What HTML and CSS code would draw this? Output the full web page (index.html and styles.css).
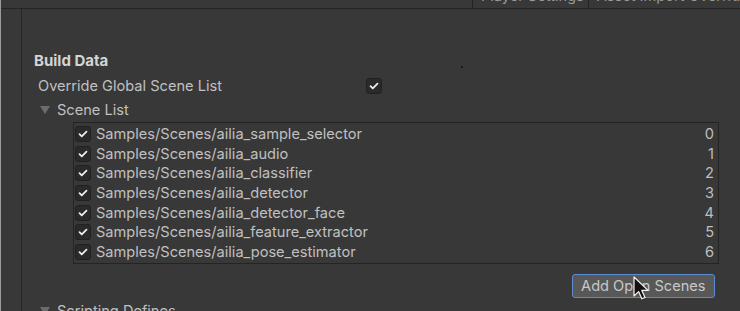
FILE: index.html
```html
<!DOCTYPE html>
<html lang="en">
<head>
  <meta charset="UTF-8">
  <title>Build Settings</title>
  <link rel="stylesheet" href="styles.css">
</head>
<body>
  <div class="window">
    <div class="tabbar">
      <div class="tab">Player Settings</div>
      <div class="tab">Asset Import Overrides</div>
    </div>
    <div class="body">
      <div class="gutter"></div>
      <div class="inspector">
        <h3 class="section-title">Build Data</h3>
        <div class="field">
          <span class="label">Override Global Scene List</span>
          <span class="checkbox"><svg viewBox="0 0 16 16"><path d="M4 8.2l2.6 2.6L12 5.4"/></svg></span>
          <span class="speck"></span>
        </div>
        <div class="foldout"><span class="arrow"></span>Scene List</div>
        <ul class="scene-list">
          <li class="scene"><span class="checkbox"><svg viewBox="0 0 16 16"><path d="M4 8.2l2.6 2.6L12 5.4"/></svg></span><span class="path">Samples/Scenes/ailia_sample_selector</span><span class="index">0</span></li>
          <li class="scene"><span class="checkbox"><svg viewBox="0 0 16 16"><path d="M4 8.2l2.6 2.6L12 5.4"/></svg></span><span class="path">Samples/Scenes/ailia_audio</span><span class="index">1</span></li>
          <li class="scene"><span class="checkbox"><svg viewBox="0 0 16 16"><path d="M4 8.2l2.6 2.6L12 5.4"/></svg></span><span class="path">Samples/Scenes/ailia_classifier</span><span class="index">2</span></li>
          <li class="scene"><span class="checkbox"><svg viewBox="0 0 16 16"><path d="M4 8.2l2.6 2.6L12 5.4"/></svg></span><span class="path">Samples/Scenes/ailia_detector</span><span class="index">3</span></li>
          <li class="scene"><span class="checkbox"><svg viewBox="0 0 16 16"><path d="M4 8.2l2.6 2.6L12 5.4"/></svg></span><span class="path">Samples/Scenes/ailia_detector_face</span><span class="index">4</span></li>
          <li class="scene"><span class="checkbox"><svg viewBox="0 0 16 16"><path d="M4 8.2l2.6 2.6L12 5.4"/></svg></span><span class="path">Samples/Scenes/ailia_feature_extractor</span><span class="index">5</span></li>
          <li class="scene"><span class="checkbox"><svg viewBox="0 0 16 16"><path d="M4 8.2l2.6 2.6L12 5.4"/></svg></span><span class="path">Samples/Scenes/ailia_pose_estimator</span><span class="index">6</span></li>
        </ul>
        <div class="actions">
          <button class="btn">Add Open Scenes</button>
          <svg class="cursor" viewBox="0 0 20 26"><path d="M2 1v19l4.6-4.4 3.2 7.2 3.2-1.4-3.2-7H16z"/></svg>
        </div>
        <div class="foldout"><span class="arrow"></span>Scripting Defines</div>
      </div>
    </div>
  </div>
</body>
</html>
```
FILE: styles.css
```css
* {
  margin: 0;
  padding: 0;
  box-sizing: border-box;
}

:root {
  --panel-bg: #383838;
  --line-dark: #242424;
  --text: #c0c0c0;
  --text-bright: #d4d4d4;
  --check-bg: #2a2a2a;
  --focus: #5b8bd1;
}

body {
  background-color: var(--panel-bg);
  color: var(--text);
  font-family: 'Inter', 'Liberation Sans', sans-serif;
  font-size: 14.6px;
  width: 740px;
  height: 311px;
  overflow: hidden;
}

.window {
  height: 100%;
  border-left: 1px solid #9c9c9c;
  display: flex;
  flex-direction: column;
}

.tabbar {
  height: 9px;
  flex-shrink: 0;
  display: flex;
  padding-left: 471px;
  border-bottom: 1px solid var(--line-dark);
  overflow: hidden;
}

.tab {
  padding: 0 4px 0 8px;
  margin-top: -12px;
  line-height: 16px;
  color: #9a9a9a;
  white-space: nowrap;
  border-left: 1px solid var(--line-dark);
}

.body {
  flex: 1;
  display: flex;
}

.gutter {
  width: 21px;
  border-right: 1px solid #262626;
}

.inspector {
  flex: 1;
  padding: 42px 0 0 12px;
  position: relative;
}

.section-title {
  font-size: 15px;
  font-weight: bold;
  color: var(--text-bright);
  line-height: 19px;
  margin-bottom: 6px;
}

.field {
  display: flex;
  align-items: center;
  height: 20px;
  padding-left: 4px;
  position: relative;
}

.label {
  width: 328px;
}

.checkbox {
  width: 16px;
  height: 16px;
  border: 1px solid #212121;
  border-radius: 3px;
  background-color: var(--check-bg);
  display: inline-flex;
  align-items: center;
  justify-content: center;
  flex-shrink: 0;
}

.checkbox svg {
  width: 14px;
  height: 14px;
  fill: none;
  stroke: #eeeeee;
  stroke-width: 2;
  stroke-linecap: round;
  stroke-linejoin: round;
}

.speck {
  position: absolute;
  left: 427px;
  top: -10px;
  width: 2px;
  height: 2px;
  border-radius: 50%;
  background-color: #111;
}

.foldout {
  display: flex;
  align-items: center;
  height: 20px;
  padding-left: 6px;
  margin-top: 4px;
}

.arrow {
  width: 0;
  height: 0;
  border-left: 5px solid transparent;
  border-right: 5px solid transparent;
  border-top: 8px solid #6c6c6c;
  margin-right: 7px;
}

.scene-list {
  list-style: none;
  margin: 2px 0 0 39px;
  width: 646px;
  border: 1px solid var(--line-dark);
  padding: 1px 4px 1px 1px;
}

.scene {
  display: flex;
  align-items: center;
  height: 19.7px;
}

.scene .checkbox {
  margin-right: 5px;
}

.path {
  flex: 1;
}

.index {
  color: #bdbdbd;
}

.actions {
  display: flex;
  justify-content: flex-end;
  width: 681px;
  margin-top: 10px;
  position: relative;
}

.btn {
  font: inherit;
  color: #c8c8c8;
  background-color: #585858;
  border: 1px solid var(--focus);
  border-radius: 3px;
  height: 24px;
  padding: 0 8.5px;
}

.cursor {
  position: absolute;
  right: 63px;
  top: 2px;
  width: 20px;
  height: 26px;
  fill: #111;
  stroke: #f2f2f2;
  stroke-width: 1.2;
  stroke-linejoin: round;
}

.actions + .foldout {
  margin-top: 3px;
}
```
